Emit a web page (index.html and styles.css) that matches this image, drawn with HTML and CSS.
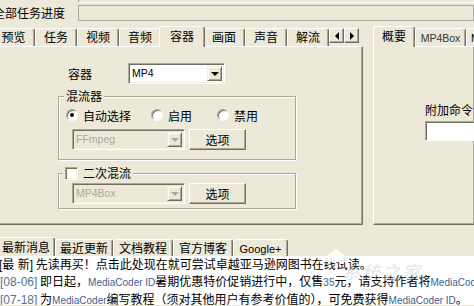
FILE: index.html
```html
<!DOCTYPE html>
<html lang="zh-CN">
<head>
<meta charset="utf-8">
<title>MediaCoder</title>
<link rel="stylesheet" href="styles.css">
</head>
<body>
<div class="topedge"></div>
<div class="progress-row">
  <span class="plabel">全部任务进度</span>
  <div class="pbar"></div>
</div>

<div class="main">
  <div class="tabctl left">
    <div class="tabs">
      <div class="tab first">预览</div>
      <div class="tab">任务</div>
      <div class="tab">视频</div>
      <div class="tab">音频</div>
      <div class="tab sel">容器</div>
      <div class="tab">画面</div>
      <div class="tab">声音</div>
      <div class="tab">解流</div>
      <div class="spin">
        <span class="sbtn"><i class="tri-l"></i></span>
        <span class="sbtn"><i class="tri-r"></i></span>
      </div>
    </div>
    <div class="panel">
      <div class="row1">
        <span class="flabel">容器</span>
        <div class="combo w97">
          <span class="cval lat">MP4</span>
          <span class="cbtn"><i class="tri-d"></i></span>
        </div>
      </div>

      <fieldset class="grp">
        <legend class="lg">混流器</legend>
        <div class="radios">
          <span class="ritem w85"><span class="radio on"></span>自动选择</span>
          <span class="ritem w66"><span class="radio"></span>启用</span>
          <span class="ritem"><span class="radio"></span>禁用</span>
        </div>
        <div class="crow gap9">
          <div class="combo w113 dis">
            <span class="cval lat">FFmpeg</span>
            <span class="cbtn"><i class="tri-d"></i></span>
          </div>
          <div class="btn">选项</div>
        </div>
      </fieldset>

      <fieldset class="grp grp2">
        <legend class="lg2"><span class="chk"></span><span>二次混流</span></legend>
        <div class="crow top2">
          <div class="combo w113 dis">
            <span class="cval lat">MP4Box</span>
            <span class="cbtn"><i class="tri-d"></i></span>
          </div>
          <div class="btn">选项</div>
        </div>
      </fieldset>
    </div>
  </div>

  <div class="tabctl right">
    <div class="tabs">
      <div class="tab sel rsel">概要</div>
      <div class="tab wbox"><span class="lat">MP4Box</span></div>
      <div class="tab wmore"><span class="lat">Mencoder</span></div>
    </div>
    <div class="panel rpanel">
      <div class="cmdlabel">附加命令</div>
      <div class="edit"></div>
    </div>
  </div>
</div>

<div class="news">
  <div class="ntabs">
    <div class="ntab nsel">最新消息</div>
    <div class="ntab n58">最近更新</div>
    <div class="ntab n60">文档教程</div>
    <div class="ntab n60">官方博客</div>
    <div class="ntab n55"><span class="lat11">Google+</span></div>
  </div>
  <div class="nbody">
    <div class="line first-line"><span class="tag">[最 新]</span> 先读再买！点击此处现在就可尝试卓越亚马逊网图书在线试读。</div>
    <div class="line"><span class="date">[08-06]</span> 即日起，<span class="mc">MediaCoder ID</span>暑期优惠特价促销进行中，仅售<span class="mc">35</span>元，请支持作者将<span class="mc">MediaCoder</span></div>
    <div class="line"><span class="date">[07-18]</span> 为<span class="mc">MediaCoder</span>编写教程（须对其他用户有参考价值的），可免费获得<span class="mc">MediaCoder ID</span>。</div>
  </div>
</div>

<div class="watermark">
  <span class="roof"></span>
  <span class="wmtext">系统之家</span>
</div>
</body>
</html>
```

FILE: styles.css
```css
* { box-sizing: border-box; }
html, body { margin: 0; padding: 0; }
body {
  width: 474px;
  height: 306px;
  overflow: hidden;
  position: relative;
  background: #ECE9D8;
  font-family: "Noto Sans CJK SC", sans-serif;
  font-size: 12px;
  color: #000;
}
.lat { font-family: "Liberation Sans", Arial, sans-serif; font-size: 10.5px; }
.lat11 { font-family: "Liberation Sans", Arial, sans-serif; font-size: 11px; }

/* top strip */
.topedge {
  height: 3px;
  margin-left: 78px;
  border-bottom: 1px solid #fff;
  border-left: 1px solid #ACA899;
}
.progress-row {
  display: flex;
  align-items: center;
  height: 16px;
  margin-top: 2px;
}
.plabel {
  flex: none;
  width: 85px;
  margin-left: -7px;
  line-height: 16px;
  white-space: nowrap;
}
.pbar {
  flex: 1;
  height: 16px;
  border: 1px solid #ACA899;
}

/* tab controls */
.main {
  display: flex;
  margin-top: 5px;
}
.tabctl.left {
  flex: none;
  width: 371px;
  margin-left: -8px;
}
.tabctl.right {
  flex: 1;
  min-width: 0;
  margin-left: 10px;
}
.tabs {
  display: flex;
  align-items: flex-end;
  height: 20px;
  white-space: nowrap;
}
.tab {
  flex: none;
  width: 42px;
  height: 18px;
  text-align: center;
  line-height: 16px;
  border-top: 1px solid #fff;
  border-left: 1px solid #fff;
  border-right: 1px solid #716F64;
  box-shadow: inset -1px 0 #ACA899;
  border-radius: 3px 3px 0 0;
  overflow: hidden;
}
.tab.first { width: 43px; }
.tab.sel {
  width: 46px;
  height: 21px;
  margin: 0 -2px -1px;
  line-height: 18px;
  position: relative;
  z-index: 1;
  background: #ECE9D8;
}
.tab.rsel { width: 42px; margin: 0 0 -1px 0; }
.tab.wbox { width: 51px; color: #333; }
.tab.wmore { width: 60px; text-align: left; padding-left: 4px; }

.spin {
  display: flex;
  align-self: flex-start;
  margin-top: 2px;
}
.sbtn {
  width: 15px;
  height: 15px;
  display: flex;
  align-items: center;
  justify-content: center;
  border: 1px solid;
  border-color: #fff #716F64 #716F64 #fff;
  box-shadow: inset -1px -1px #ACA899;
}
.tri-l, .tri-r, .tri-d { display: block; width: 0; height: 0; }
.tri-l { border-top: 4px solid transparent; border-bottom: 4px solid transparent; border-right: 4px solid #000; }
.tri-r { border-top: 4px solid transparent; border-bottom: 4px solid transparent; border-left: 4px solid #000; }
.tri-d { border-left: 4px solid transparent; border-right: 4px solid transparent; border-top: 4px solid #000; }

.panel {
  height: 179px;
  border: 1px solid;
  border-color: #fff #716F64 #716F64 #fff;
  box-shadow: inset -1px -1px #ACA899;
}
.rpanel {
  border-right: none;
  padding-left: 51px;
}

/* container page */
.row1 {
  display: flex;
  align-items: center;
  margin-top: 16px;
  padding-left: 75px;
}
.flabel { width: 60px; flex: none; }

.combo {
  display: flex;
  align-items: center;
  height: 21px;
  background: #fff;
  border: 1px solid;
  border-color: #ACA899 #fff #fff #ACA899;
  box-shadow: inset 1px 1px #716F64, inset -1px -1px #F1EFE2;
  padding: 2px;
}
.w97 { width: 97px; }
.w113 { width: 113px; }
.cval { flex: 1; padding-left: 1px; line-height: 15px; }
.cbtn {
  width: 15px;
  height: 15px;
  display: flex;
  align-items: center;
  justify-content: center;
  background: #ECE9D8;
  border: 1px solid;
  border-color: #F1EFE2 #716F64 #716F64 #F1EFE2;
  box-shadow: inset 1px 1px #fff, inset -1px -1px #ACA899;
}
.combo.dis { background: #ECE9D8; }
.combo.dis .cval { color: #ACA899; }
.combo.dis .tri-d { border-top-color: #ACA899; }

.grp {
  margin: 4px 0 0 65px;
  width: 238px;
  padding: 0;
  min-width: 0;
  border: 1px solid #ACA899;
  box-shadow: inset 1px 1px #fff, 1px 1px #fff;
}
.grp2 { margin-top: 5px; }
.lg {
  margin-left: 5px;
  padding: 0 2px;
  line-height: 16px;
  background: #ECE9D8;
}
.lg2 {
  margin-left: 4px;
  padding: 0 2px;
  line-height: 16px;
  background: #ECE9D8;
  display: flex;
  align-items: center;
  gap: 5px;
}
.chk {
  width: 13px;
  height: 13px;
  background: #fff;
  border: 1px solid;
  border-color: #ACA899 #fff #fff #ACA899;
  box-shadow: inset 1px 1px #716F64, inset -1px -1px #F1EFE2;
}

.radios {
  display: flex;
  align-items: center;
  height: 14px;
  margin-top: 4px;
  padding-left: 7px;
}
.ritem {
  display: flex;
  align-items: center;
  gap: 5px;
  flex: none;
}
.w85 { width: 85px; }
.w66 { width: 66px; }
.radio {
  width: 12px;
  height: 12px;
  border-radius: 50%;
  background: #fff;
  border: 1px solid;
  border-color: #ACA899 #fff #fff #ACA899;
  box-shadow: inset 1px 1px #716F64;
  display: flex;
  align-items: center;
  justify-content: center;
}
.radio.on::after {
  content: "";
  width: 4px;
  height: 4px;
  border-radius: 50%;
  background: #000;
}

.crow {
  display: flex;
  gap: 4px;
  padding-left: 13px;
  margin-top: 7px;
  margin-bottom: 9px;
}
.crow.top2 { margin-top: 2px; margin-bottom: 4px; }
.btn {
  width: 57px;
  height: 21px;
  text-align: center;
  line-height: 19px;
  border: 1px solid;
  border-color: #fff #716F64 #716F64 #fff;
  box-shadow: inset -1px -1px #ACA899;
}

/* right page */
.cmdlabel {
  margin-top: 55px;
  line-height: 16px;
  white-space: nowrap;
}
.edit {
  margin-top: 3px;
  width: 80px;
  height: 20px;
  background: #fff;
  border: 1px solid;
  border-color: #ACA899 #fff #fff #ACA899;
  box-shadow: inset 1px 1px #716F64;
}

/* news */
.news { margin-top: 12px; }
.ntabs {
  display: flex;
  align-items: flex-end;
  height: 19px;
  white-space: nowrap;
}
.ntab {
  flex: none;
  height: 17px;
  text-align: center;
  line-height: 16px;
  border-top: 1px solid #fff;
  border-left: 1px solid #fff;
  border-right: 1px solid #716F64;
  box-shadow: inset -1px 0 #ACA899;
  border-radius: 3px 3px 0 0;
}
.nsel { width: 58px; margin-left: -3px; height: 19px; line-height: 17px; }
.n58 { width: 58px; }
.n60 { width: 60px; }
.n55 { width: 55px; }
.nbody {
  background: #fff;
  height: 49px;
  overflow: hidden;
}
.line {
  line-height: 16px;
  white-space: nowrap;
}
.first-line { margin-left: -1px; }
.tag, .date { font-family: "Liberation Sans", "Noto Sans CJK SC", sans-serif; }
.date { color: #5B7091; }
.mc {
  font-family: "Liberation Sans", Arial, sans-serif;
  font-size: 10px;
  color: #3F5F92;
}

/* watermark overlay */
.watermark {
  position: absolute;
  left: 312px;
  top: 244px;
  width: 120px;
  height: 48px;
  pointer-events: none;
}
.roof {
  position: absolute;
  left: 8px;
  top: 4px;
  width: 0;
  height: 0;
  border-left: 16px solid transparent;
  border-right: 16px solid transparent;
  border-bottom: 14px solid rgba(255,255,255,0.85);
}
.wmtext {
  position: absolute;
  left: 30px;
  top: 14px;
  font-size: 18px;
  font-style: italic;
  letter-spacing: 2px;
  color: rgba(200,208,222,0.55);
}
```
